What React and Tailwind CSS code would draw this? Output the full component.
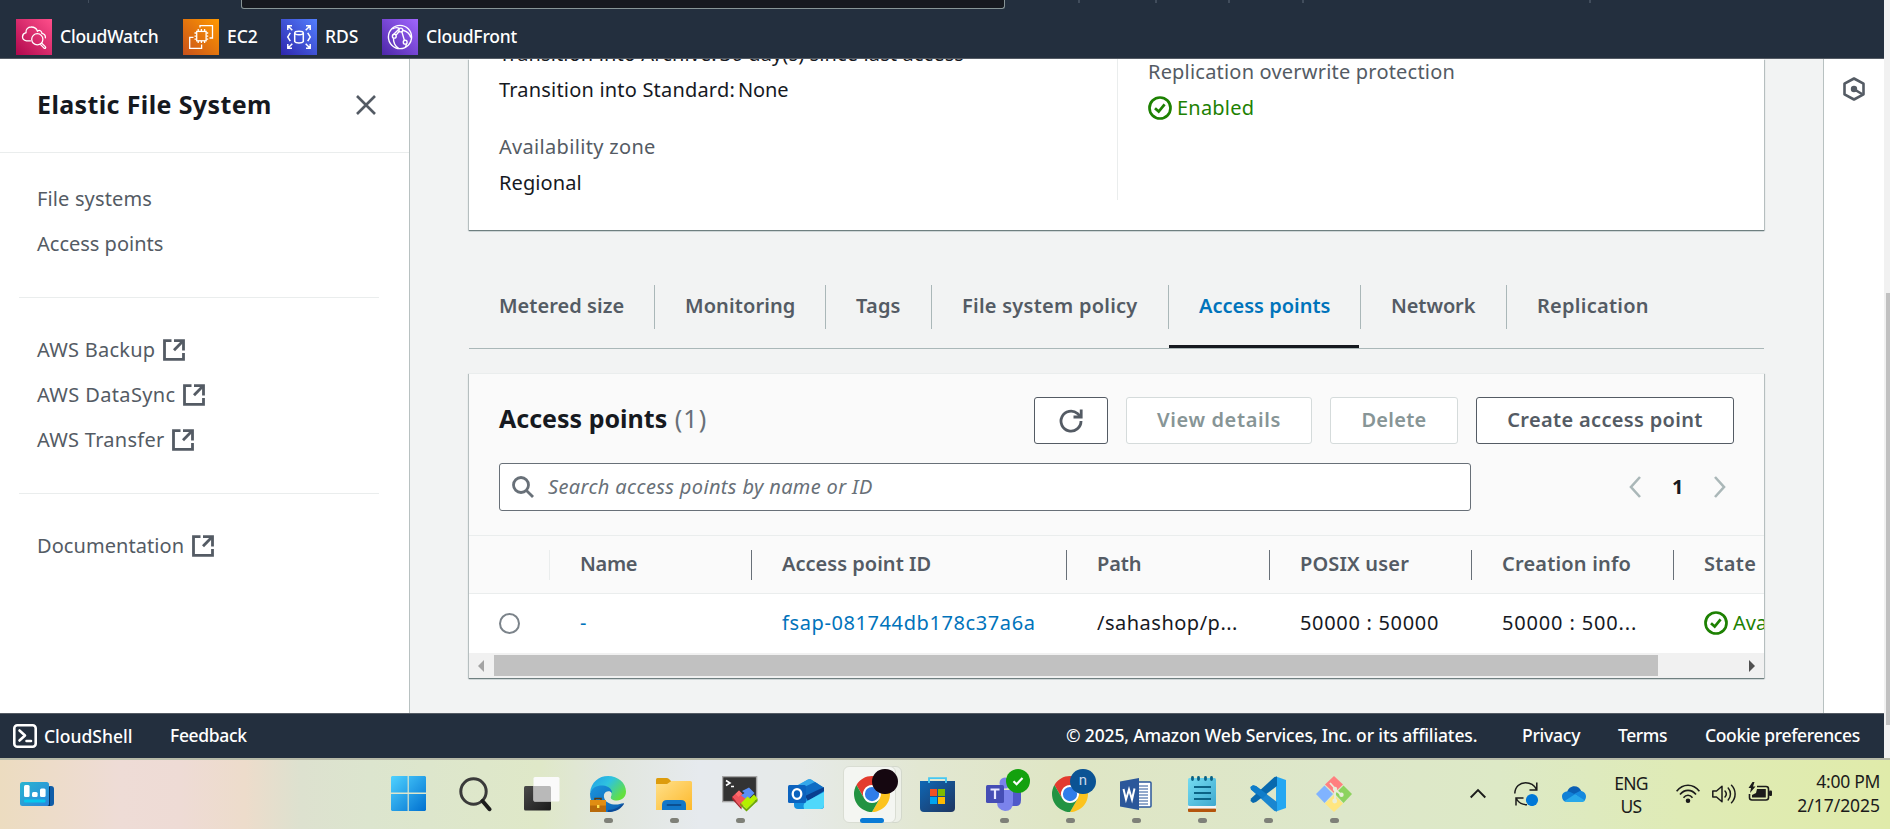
import React from "react";

/* ---------- small console icons ---------- */

const External = () => (
  <svg className="ml-2 h-[22px] w-[22px] shrink-0" viewBox="0 0 22 22" fill="none" stroke="#545b64" strokeWidth="2.8">
    <path d="M8.5 1.6H1.5V20.4H20.5V14" />
    <path d="M11 1.6H20.5V11.5" />
    <path d="M20 2L11 11.2" />
  </svg>
);

const Check = () => (
  <svg className="h-6 w-6 shrink-0" viewBox="0 0 24 24" fill="none" stroke="#1d8102" strokeWidth="2.7">
    <circle cx="12" cy="12" r="10.5" />
    <path d="M7 12.2L10.7 15.6L16.6 8.3" />
  </svg>
);

/* ---------- favourites bar ---------- */

const CloudWatchIcon = () => (
  <svg className="h-9 w-9" viewBox="0 0 36 36">
    <defs>
      <linearGradient id="cw" x1="0" y1="1" x2="1" y2="0">
        <stop offset="0" stopColor="#b0084d" />
        <stop offset="1" stopColor="#ff4f8b" />
      </linearGradient>
    </defs>
    <rect width="36" height="36" fill="url(#cw)" />
    <g fill="none" stroke="#fff" strokeWidth="1.3" strokeLinecap="round">
      <path d="M14.5 21.8H10.5C7.5 21.2 6.4 19.4 6.5 17.6C6.7 15.2 8.4 14.1 10 13.7C9.5 10.4 12 8 15 8C18.5 7.9 20.6 9.6 21.4 12.1C23.5 10.6 25.6 11.8 26 14.4C28.3 15 29.6 16.6 29.4 18.8" />
      <circle cx="21.3" cy="20.3" r="5.6" />
      <path d="M24.6 25.6L28 29.1C29.3 30 30.2 28.6 29.3 27.6L25.8 24.3" />
    </g>
  </svg>
);

const Ec2Icon = () => (
  <svg className="h-9 w-9" viewBox="0 0 36 36">
    <defs>
      <linearGradient id="ec" x1="0" y1="1" x2="1" y2="0">
        <stop offset="0" stopColor="#c8511b" />
        <stop offset="1" stopColor="#ff9900" />
      </linearGradient>
    </defs>
    <rect width="36" height="36" fill="url(#ec)" />
    <g fill="none" stroke="#fff" strokeWidth="1.3">
      <rect x="13.7" y="12.4" width="9.4" height="9.4" />
      <path d="M15.2 12V10M18.4 12V10M21.6 12V10M15.2 24V22M18.4 24V22M21.6 24V22M13.4 14H11.5M13.4 17.1H11.5M13.4 20.2H11.5M25.2 14H23.4M25.2 17.1H23.4M25.2 20.2H23.4" />
      <path d="M17 8.5V6.7H29.5V19H26.5" />
      <path d="M10.5 18.3H6.7V29.3H18.6V25.5" />
    </g>
  </svg>
);

const RdsIcon = () => (
  <svg className="h-9 w-9" viewBox="0 0 36 36">
    <defs>
      <linearGradient id="rd" x1="0" y1="1" x2="1" y2="0">
        <stop offset="0" stopColor="#2e27ad" />
        <stop offset="1" stopColor="#527fff" />
      </linearGradient>
    </defs>
    <rect width="36" height="36" fill="url(#rd)" />
    <g fill="none" stroke="#fff" strokeWidth="1.5">
      <path d="M6.8 11V6.8H11M6.8 6.8L11.3 11.3M25 6.8H29.2V11M29.2 6.8L24.7 11.3M6.8 25V29.2H11M6.8 29.2L11.3 24.7M25 29.2H29.2V25M29.2 29.2L24.7 24.7" />
      <path d="M9.3 13.8L6.7 18L9.3 22.2M26.7 13.8L29.3 18L26.7 22.2" />
      <path d="M13.7 14V22.6C14.8 24.4 21.2 24.4 22.3 22.6V14" />
      <ellipse cx="18" cy="14" rx="4.3" ry="1.7" />
    </g>
  </svg>
);

const CloudFrontIcon = () => (
  <svg className="h-9 w-9" viewBox="0 0 36 36">
    <defs>
      <linearGradient id="cf" x1="0" y1="1" x2="1" y2="0">
        <stop offset="0" stopColor="#4d27a8" />
        <stop offset="1" stopColor="#a166ff" />
      </linearGradient>
    </defs>
    <rect width="36" height="36" fill="url(#cf)" />
    <g fill="none" stroke="#fff" strokeWidth="1.4">
      <circle cx="18" cy="18" r="11.6" />
      <circle cx="18.8" cy="11" r="1.9" />
      <circle cx="12.3" cy="17.2" r="1.9" />
      <circle cx="23.2" cy="23.2" r="1.9" />
      <path d="M14.1 16.1L17.3 12.3M19.8 12.600L22.4 21.4M11 15.900L17.300 9.800M17.4 9.4C14.5 7.6 12 9 10.4 10M20.8 11.3C25 12.4 28 15 28.8 18.6M11.5 19.2C11.3 23.6 13.2 27 16.5 29.4M24.2 24.9C24.4 26.3 24 27.3 23.3 28.2" />
    </g>
  </svg>
);

/* ---------- taskbar icons ---------- */

const WindowsIcon = () => (
  <svg className="-ml-px h-[35px] w-[35px]" viewBox="0 0 35 35">
    <defs>
      <linearGradient id="wi" x1="0" y1="0" x2="1" y2="1">
        <stop offset="0" stopColor="#4fd2ff" />
        <stop offset="1" stopColor="#0070d0" />
      </linearGradient>
    </defs>
    <path d="M1 0H16.6V16.6H0V1ZM17.8 0H34L35 1V16.6H17.8ZM0 18H16.6V35H1L0 34ZM17.8 18H35V34L34 35H17.8Z" fill="url(#wi)" />
  </svg>
);

const SearchIcon = () => (
  <svg className="h-9 w-9" viewBox="0 0 36 36" fill="none">
    <circle cx="15.5" cy="15.5" r="12.7" stroke="#3a3a3a" strokeWidth="3" />
    <path d="M24.5 25L31.500 33.2" stroke="#1c1c1c" strokeWidth="4" strokeLinecap="round" />
  </svg>
);

const TaskViewIcon = () => (
  <svg className="h-9 w-9" viewBox="0 0 36 36">
    <defs>
      <linearGradient id="tv" x1="0" y1="0" x2="1" y2="1">
        <stop offset="0" stopColor="#4a4a4a" />
        <stop offset="1" stopColor="#1b1b1b" />
      </linearGradient>
    </defs>
    <rect x="0" y="10" width="27" height="24.5" rx="1.5" fill="url(#tv)" />
    <rect x="9.5" y="1" width="26" height="24.5" rx="1.5" fill="#fafafa" />
    <path d="M9.5 10H25.5Q27 10 27 11.5V25.5H11Q9.5 25.5 9.5 24Z" fill="#b9b9b9" />
  </svg>
);

const EdgeIcon = () => (
  <svg className="h-9 w-9" viewBox="0 0 36 36">
    <defs>
      <linearGradient id="ed" x1="0" y1="0" x2="1" y2="0.6">
        <stop offset="0" stopColor="#1f9de8" />
        <stop offset="0.5" stopColor="#2fc3df" />
        <stop offset="1" stopColor="#63e03f" />
      </linearGradient>
      <linearGradient id="ed2" x1="0" y1="0" x2="1" y2="1">
        <stop offset="0" stopColor="#1a95de" />
        <stop offset="1" stopColor="#0c5db0" />
      </linearGradient>
    </defs>
    <path d="M0 17C1 6 9 0 18 0C28 0 36 7 36 15.500C36 21 32 24.500 27 24.500C22 24.500 20 22.500 21 20.500C23 17 20 13 15 12C8 11 2 13 0 17Z" fill="url(#ed)" />
    <path d="M0 17.500C2 11 8 9 13 9.500C19 10 22.500 14 22 17C20 14 15 15 14 18.500C13 24 18 28 24 28.500C28 29 31 27.500 33 27C30 33 24 36 18 36C7 36 0 28 0 17.500Z" fill="url(#ed2)" />
    <path d="M18 34C25 34 29 31 33.500 27L34 28C30 34 25 36 18 36Z" fill="#0a4a97" />
    <path d="M5 24.500V22.500H11V24.500" fill="none" stroke="#5a3a10" strokeWidth="1.500" />
    <rect x="0" y="24" width="16" height="12" fill="#b86a0a" />
    <rect x="0" y="24" width="16" height="5.500" fill="#e08d12" />
    <rect x="7" y="29" width="2.400" height="3" fill="#ffe14d" />
  </svg>
);

const FolderIcon = () => (
  <svg className="h-9 w-9" viewBox="0 0 36 36">
    <defs>
      <linearGradient id="fo" x1="0" y1="0" x2="1" y2="1">
        <stop offset="0" stopColor="#ffe08a" />
        <stop offset="1" stopColor="#fdb92c" />
      </linearGradient>
    </defs>
    <path d="M0 3.500Q0 2 1.500 2H10.500Q12 2 13 3L15 5V12H0Z" fill="#dd9c0c" />
    <path d="M0 8H11L15.500 5H34.500Q36 5 36 6.500V34H0Z" fill="url(#fo)" />
    <path d="M6 34V29Q6 24 11 24H25Q30 24 30 29V34Z" fill="#1277c8" />
    <path d="M11.500 29H24.500" stroke="#0b4f91" strokeWidth="1.800" strokeLinecap="round" />
  </svg>
);

const MobaIcon = () => (
  <svg className="h-9 w-9" viewBox="0 0 36 36">
    <rect x="0.600" y="0.600" width="34" height="25" fill="#333" stroke="#a6a6a6" strokeWidth="1.400" />
    <path d="M4 4.500L8 7L4 9.500M9 10.500H12" fill="none" stroke="#fff" strokeWidth="1.600" />
    <path d="M10 21L17 14.500L27 24.500L19.500 31.500Z" fill="#f0545c" />
    <path d="M10 21L19.500 31.500V33.500L10 23Z" fill="#a82028" />
    <path d="M17 14.500L20 17.500L16.500 21L13.500 18Z" fill="#ff6b6b" />
    <path d="M20 15L27 11.500L32.500 17L25.500 24L19 19.500L22.500 17Z" fill="#5a8ff5" />
    <path d="M19 27L25.500 20.500L28 22.500L32 18.500L35.500 22.500L24.500 33Z" fill="#b4f000" />
    <path d="M24.500 33L35.500 22.500V25L24.500 35.500L18 29V27Z" fill="#6da900" />
  </svg>
);

const OutlookIcon = () => (
  <svg className="h-9 w-9" viewBox="0 0 36 36">
    <path d="M6 12L20 3.500Q21.500 2.800 23 3.500L36 12V30Q36 33 33 33H10Q6 33 6 29Z" fill="#1490df" />
    <path d="M6 11L20 3.500Q21.500 2.800 23 3.500L30 8L16 16Z" fill="#35a8ea" />
    <path d="M14 12L27 6L35 11L18 22Z" fill="#0f6cc4" />
    <path d="M17 20L36 11V15L20 25Z" fill="#0a3f8f" />
    <path d="M16 33Q14 27 20 24.500L36 16V29Q36 33 32 33Z" fill="#4fd8fb" />
    <rect x="0" y="9" width="18" height="18" rx="1.500" fill="#0c63bf" />
    <ellipse cx="9" cy="18" rx="4.300" ry="4.800" fill="none" stroke="#fff" strokeWidth="2.300" />
  </svg>
);

const ChromeIcon = () => (
  <svg className="h-9 w-9" viewBox="0 0 48 48">
    <circle cx="24" cy="24" r="12" fill="#fff" />
    <path d="M24 12H44.780a24 24 0 0 0-41.560 0L13.608 30l.01 0A11.985 11.985 0 0 1 24 12Z" fill="#e33b2e" />
    <path d="M34.391 30 24 48A24 24 0 0 0 44.780 12H24A11.985 11.985 0 0 1 34.391 30Z" fill="#fcc31e" />
    <path d="M13.609 30 3.218 12A24 24 0 0 0 24 48L34.393 30a11.985 11.985 0 0 1-20.784 0Z" fill="#229342" />
    <circle cx="24" cy="24" r="9.500" fill="#2f7de9" />
  </svg>
);

const StoreIcon = () => (
  <svg className="h-9 w-9" viewBox="0 0 36 36">
    <defs>
      <linearGradient id="st" x1="0" y1="0" x2="1" y2="1">
        <stop offset="0" stopColor="#0f67b5" />
        <stop offset="1" stopColor="#1e3560" />
      </linearGradient>
    </defs>
    <path d="M0 5H35V32Q35 36 31 36H4Q0 36 0 32Z" fill="url(#st)" />
    <path d="M9 7V2.200H26V7" fill="none" stroke="#45c8f2" strokeWidth="1.800" />
    <rect x="10" y="13" width="7" height="7" fill="#f25022" />
    <rect x="18" y="13" width="7" height="7" fill="#7fba00" />
    <rect x="10" y="21" width="7" height="7" fill="#00a4ef" />
    <rect x="18" y="21" width="7" height="7" fill="#ffb900" />
  </svg>
);

const TeamsIcon = () => (
  <svg className="h-9 w-9" viewBox="0 0 36 36">
    <circle cx="19" cy="7" r="5.500" fill="#7b83eb" />
    <circle cx="31" cy="9" r="4" fill="#5059c9" />
    <path d="M24 14H35V24Q35 30 30 30H25Z" fill="#5059c9" />
    <path d="M11 14H27V26Q27 35 19 35Q11 34 11 26Z" fill="#7b83eb" />
    <rect x="0" y="9" width="18" height="18" rx="1.500" fill="#454db5" />
    <path d="M4.500 13.500H13.500M9 13.500V23" stroke="#e8e8ff" strokeWidth="2.200" />
  </svg>
);

const WordIcon = () => (
  <svg className="h-9 w-9" viewBox="0 0 36 36">
    <rect x="16" y="6" width="17" height="25" rx="1" fill="#fff" stroke="#2b579a" strokeWidth="1.500" />
    <path d="M20 10H30M20 13H30M20 16H30M20 19H30M20 22H30M20 25H30M20 28H30" stroke="#2b579a" strokeWidth="1.200" />
    <path d="M2 5.500L21 2V34L2 30.500Z" fill="#2b579a" />
    <path d="M5.500 13L8 23.500L11 13.500L14 23.500L16.500 12.500" fill="none" stroke="#fff" strokeWidth="2" />
  </svg>
);

const NotepadIcon = () => (
  <svg className="h-9 w-9" viewBox="0 0 36 36">
    <defs>
      <linearGradient id="np" x1="0" y1="0" x2="1" y2="1">
        <stop offset="0" stopColor="#74dcf2" />
        <stop offset="1" stopColor="#3fa9cf" />
      </linearGradient>
    </defs>
    <rect x="4" y="32" width="28" height="4" rx="1" fill="#b4550c" />
    <rect x="4" y="29" width="28" height="3.600" fill="#f5f5f5" />
    <rect x="4" y="2" width="28" height="28" rx="1.500" fill="url(#np)" />
    <path d="M10 11H27M10 17H27M10 23H27" stroke="#0b6285" strokeWidth="1.800" />
    <path d="M8.500 1.400V3.600M14.500 1.400V3.600M21.500 1.400V3.600M27.500 1.400V3.600" stroke="#0b6285" strokeWidth="2.800" strokeLinecap="round" />
  </svg>
);

const CodeIcon = () => (
  <svg className="h-9 w-9" viewBox="0 0 36 36">
    <path d="M26 0.500L36 4V32L26 35.500Z" fill="#24a7f2" />
    <path d="M0.500 11L3 9.200L6 10L27 26V35.500L24.500 35L1 13.500Z" fill="#1a86d0" />
    <path d="M0.500 25L3 27L6 26L27 10V0.500L24.500 1L1 22.500Z" fill="#0869ae" />
    <path d="M0.500 11L3 9.200L6 10L17 18.300L12.500 22.500L1 13.500Z" fill="#0f7cc9" />
  </svg>
);

const GitIcon = () => (
  <svg className="h-9 w-9" viewBox="0 0 36 36">
    <path d="M18 0L27 8.500L18 17L9 8.500Z" fill="#ff8080" />
    <path d="M8.500 9.500L17 18L8.500 27L0 18Z" fill="#80b3ff" />
    <path d="M27.500 9.500L36 18L27.500 27L19 18Z" fill="#8dd35f" />
    <path d="M18 19L27 27.500L18 36L9 27.500Z" fill="#ffe680" />
    <path d="M14 7L19 12.500V24M19 13.500L25 18.500" fill="none" stroke="#e9eedb" strokeWidth="1.800" />
    <circle cx="19" cy="13" r="2.200" fill="#e9eedb" />
    <circle cx="25.500" cy="18.800" r="2.200" fill="#e9eedb" />
    <circle cx="18.700" cy="25" r="2.400" fill="#e9eedb" />
  </svg>
);

/* ---------- building blocks ---------- */

const Fav = ({ icon, label, box, text }) => (
  <div className={"flex items-center " + box}>
    {icon}
    <span className={"ml-2 text-[17.5px] font-medium text-white " + text}>{label}</span>
  </div>
);

const NavLink = ({ label, ext, text }) => (
  <div className="flex h-[45px] items-center text-[20px] text-[#545b64]">
    <span className={text}>{label}</span>
    {ext && <External />}
  </div>
);

const Tab = ({ label, box, text, active, last }) => (
  <div className={"relative flex h-[63px] items-start " + box}>
    <div className={"flex h-11 w-full items-center pb-[3px] pl-[30px] text-[20px] font-semibold " + (last ? "" : "border-r border-[#aab7b8] ") + (active ? "text-[#0073bb]" : "text-[#545b64]")}>
      <span className={text}>{label}</span>
    </div>
    {active && <div className="absolute bottom-0 left-0 h-[3px] w-[190px] bg-[#16191f]" />}
  </div>
);

const Th = ({ label, box, text, last }) => (
  <div className={"flex h-[30px] shrink-0 items-center whitespace-nowrap pb-px pl-[30px] text-[20px] font-semibold text-[#545b64] " + (last ? "" : "border-r border-[#687078] ") + box}>
    <span className={text}>{label}</span>
  </div>
);

const Td = ({ children, box }) => (
  <div className={"flex shrink-0 items-center whitespace-nowrap pb-px pl-[30px] text-[20px] " + box}>{children}</div>
);

const Task = ({ icon, dot, active, badge }) => (
  <div className="relative flex h-[69px] w-[66px] shrink-0 justify-center pt-4">
    {active && (
      <>
        <div className="absolute left-[7px] top-[6px] h-[57px] w-[56px] rounded-md border border-[#d3d8cc] bg-[#edf0e8]" />
        <div className="absolute left-[4px] top-[6px] h-[57px] w-[53px] rounded-md border border-[#d9ddd3] bg-[#f4f6f2]" />
      </>
    )}
    <div className="relative h-9 w-9">{icon}</div>
    {dot && <div className="absolute left-[29px] top-[58px] h-[5px] w-[9px] rounded-full bg-[#7e8078]" />}
    {active && <div className="absolute left-[21px] top-[58px] h-[5px] w-6 rounded-full bg-[#0a7bd6]" />}
    {badge}
  </div>
);

export default function App() {
  return (
    <div className="flex h-[829px] w-[1890px] flex-col overflow-hidden whitespace-nowrap bg-white font-['Noto_Sans',sans-serif] leading-none text-[#16191f]">
      <div className="flex h-[758px]">
        <div className="flex w-[1884px] flex-col">
          {/* console header */}
          <header className="flex h-[59px] shrink-0 flex-col border-b border-[#545b64] bg-[#232f3e]">
            <div className="flex h-[9px] items-start">
              <div className="ml-[88px] h-[3px] w-px bg-[#414d5c]" />
              <div className="ml-[152px] h-[9px] w-[764px] rounded-b-[3px] border border-t-0 border-[#879596] bg-[#16191f]" />
              <div className="ml-[73px] h-[3px] w-[2px] bg-[#414d5c]" />
              <div className="ml-[75px] h-[3px] w-[2px] bg-[#414d5c]" />
              <div className="ml-[71px] h-[3px] w-[2px] bg-[#414d5c]" />
              <div className="ml-[72px] h-[3px] w-[2px] bg-[#414d5c]" />
              <div className="ml-[285px] h-[3px] w-[2px] bg-[#414d5c]" />
            </div>
            <div className="flex pl-4 pt-[10px]">
              <Fav icon={<CloudWatchIcon />} label="CloudWatch" box="w-[167px]" text="-ml-px tracking-[-0.23px]" />
              <Fav icon={<Ec2Icon />} label="EC2" box="w-[98px]" text="-ml-px tracking-[-0.1px]" />
              <Fav icon={<RdsIcon />} label="RDS" box="w-[101px]" text="tracking-[-0.1px]" />
              <Fav icon={<CloudFrontIcon />} label="CloudFront" box="w-[150px]" text="tracking-[-0.2px]" />
            </div>
          </header>

          <div className="flex h-[654px] shrink-0 overflow-hidden">
            {/* side navigation */}
            <nav className="flex w-[410px] shrink-0 flex-col border-r border-[#b8c1c1] bg-white">
              <div className="flex h-[94px] items-center justify-between border-b border-[#eaeded] pb-[2px] pl-[37px] pr-[33px]">
                <span className="text-[25px] font-bold tracking-[0.38px]">Elastic File System</span>
                <svg className="h-5 w-5" viewBox="0 0 20 20" stroke="#545b64" strokeWidth="2.6">
                  <path d="M1 1L19 19M19 1L1 19" />
                </svg>
              </div>
              <div className="pl-[37px] pt-[23px]">
                <NavLink label="File systems" text="tracking-[0.14px]" />
                <NavLink label="Access points" />
              </div>
              <div className="ml-[19px] mr-[30px] mt-[31px] h-px bg-[#eaeded]" />
              <div className="pl-[37px] pt-[29px]">
                <NavLink label="AWS Backup" ext text="tracking-[0.25px]" />
                <NavLink label="AWS DataSync" ext text="tracking-[0.36px]" />
                <NavLink label="AWS Transfer" ext text="tracking-[0.26px]" />
              </div>
              <div className="ml-[19px] mr-[30px] mt-[31px] h-px bg-[#eaeded]" />
              <div className="pl-[37px] pt-[29px]">
                <NavLink label="Documentation" ext text="tracking-[0.06px]" />
              </div>
            </nav>

            {/* main content */}
            <main className="flex w-[1413px] shrink-0 flex-col overflow-hidden bg-[#f2f3f3] pl-[59px]">
              <section className="flex h-[171px] w-[1295px] shrink-0 bg-white text-[20px] leading-9 shadow-[0_1px_1px_#6f7f80,1px_1px_1px_#c5cccc,-1px_1px_1px_#c5cccc]">
                <div className="-mt-[23px] w-[648px] pl-[30px]">
                  <div className="flex gap-[3px] tracking-[0.12px]">
                    <span>Transition into Archive:</span>
                    <span>30 day(s) since last access</span>
                  </div>
                  <div className="flex gap-[3px]">
                    <span className="tracking-[0.19px]">Transition into Standard:</span>
                    <span className="tracking-[-0.1px]">None</span>
                  </div>
                  <div className="mt-[21px] tracking-[0.32px] text-[#545b64]">Availability zone</div>
                  <div className="tracking-[0.1px]">Regional</div>
                </div>
                <div className="h-[141px] border-l border-[#eaeded] pl-[30px]">
                  <div className="-mt-[5px] tracking-[0.2px] text-[#545b64]">Replication overwrite protection</div>
                  <div className="flex items-center gap-[5px] text-[#1d8102]">
                    <Check />
                    <span className="tracking-[0.2px]">Enabled</span>
                  </div>
                </div>
              </section>

              <div className="mt-[55px] flex h-[64px] w-[1295px] shrink-0 border-b border-[#aab7b8]">
                <Tab label="Metered size" box="w-[186px]" text="tracking-[0.04px]" />
                <Tab label="Monitoring" box="w-[171px]" text="tracking-[0.1px]" />
                <Tab label="Tags" box="w-[106px]" text="tracking-[0.2px]" />
                <Tab label="File system policy" box="w-[237px]" text="tracking-[0.25px]" />
                <Tab label="Access points" box="w-[192px]" active />
                <Tab label="Network" box="w-[146px]" text="tracking-[-0.1px]" />
                <Tab label="Replication" box="w-[200px]" text="tracking-[0.25px]" last />
              </div>

              <section className="mt-6 flex h-[305px] w-[1295px] shrink-0 flex-col border-t border-[#eaeded] bg-white shadow-[0_1px_1px_#6f7f80,1px_1px_1px_#c5cccc,-1px_1px_1px_#c5cccc]">
                <div className="h-[161px] shrink-0 bg-[#fafafa] pl-[30px] pr-[30px]">
                  <div className="flex items-center pt-[23px] text-[20px] font-semibold">
                    <div className="flex-1 pb-1 text-[25px] font-bold">
                      Access points <span className="ml-px font-normal tracking-[1.1px] text-[#687078]">(1)</span>
                    </div>
                    <div className="flex h-[47px] w-[74px] items-center justify-center rounded-[3px] border border-[#545b64] bg-white">
                      <svg className="h-6 w-6" viewBox="0 0 24 24" fill="none" stroke="#545b64" strokeWidth="2.8">
                        <path d="M22 12A10 10 0 1 1 18.500 4.500L21 7" />
                        <path d="M22.200 0.500V8H14.500" />
                      </svg>
                    </div>
                    <div className="ml-[18px] flex h-[47px] w-[186px] items-center justify-center rounded-[3px] border border-[#d5dbdb] bg-white pb-[2px] tracking-[0.62px] text-[#879596]">View details</div>
                    <div className="ml-[18px] flex h-[47px] w-[128px] items-center justify-center rounded-[3px] border border-[#d5dbdb] bg-white pb-[2px] tracking-[0.25px] text-[#879596]">Delete</div>
                    <div className="ml-[18px] flex h-[47px] w-[258px] items-center justify-center rounded-[3px] border border-[#545b64] bg-white pb-[2px] tracking-[0.33px] text-[#545b64]">Create access point</div>
                  </div>
                  <div className="mt-[19px] flex items-center">
                    <div className="flex h-12 w-[972px] items-center rounded-[3px] border border-[#687078] bg-white pl-3">
                      <svg className="h-[22px] w-[22px]" viewBox="0 0 22 22" fill="none" stroke="#687078" strokeWidth="2.800">
                        <circle cx="9" cy="9" r="7.500" />
                        <path d="M14.200 14.200L21 21" />
                      </svg>
                      <span className="ml-[14px] text-[20px] italic tracking-[0.36px] text-[#687078]">Search access points by name or ID</span>
                    </div>
                    <svg className="ml-[158px] h-[22px] w-3" viewBox="0 0 12 22" fill="none" stroke="#aab7b8" strokeWidth="2.600">
                      <path d="M11 1L2 11L11 21" />
                    </svg>
                    <span className="ml-[31px] w-3 text-[20px] font-bold">1</span>
                    <svg className="ml-[30px] h-[22px] w-3" viewBox="0 0 12 22" fill="none" stroke="#aab7b8" strokeWidth="2.600">
                      <path d="M1 1L10 11L1 21" />
                    </svg>
                  </div>
                </div>
                <div className="flex h-[59px] w-full shrink-0 items-center overflow-hidden border-b border-t border-[#eaeded] bg-[#fafafa]">
                  <div className="h-[30px] w-[81px] shrink-0 border-r border-[#eaeded]" />
                  <Th label="Name" box="w-[202px]" text="tracking-[-0.3px]" />
                  <Th label="Access point ID" box="w-[315px]" text="tracking-[0.02px]" />
                  <Th label="Path" box="w-[203px]" text="tracking-[-0.1px]" />
                  <Th label="POSIX user" box="w-[202px]" text="tracking-[0.16px]" />
                  <Th label="Creation info" box="w-[202px]" text="tracking-[0.18px]" />
                  <Th label="State" box="w-[120px]" text="tracking-[0.3px]" last />
                </div>
                <div className="flex h-[59px] shrink-0 overflow-hidden">
                  <Td box="w-[81px]">
                    <div className="h-[21px] w-[21px] rounded-full border-2 border-[#7b838a] bg-white" />
                  </Td>
                  <Td box="w-[202px] text-[#0073bb]">-</Td>
                  <Td box="w-[315px] text-[#0073bb] tracking-[0.6px]">fsap-081744db178c37a6a</Td>
                  <Td box="w-[203px] tracking-[0.5px]">/sahashop/p...</Td>
                  <Td box="w-[202px] tracking-[0.68px]">50000 : 50000</Td>
                  <Td box="w-[202px] tracking-[0.84px]">50000 : 500...</Td>
                  <Td box="w-[150px] gap-[5px] text-[#1d8102]">
                    <Check />
                    <span>Available</span>
                  </Td>
                </div>
                <div className="flex h-[25px] shrink-0 items-center bg-[#f1f1f1] pl-[9px] pr-[9px]">
                  <svg className="h-3 w-[6px]" viewBox="0 0 6 12"><path d="M6 0V12L0 6Z" fill="#a3a3a3" /></svg>
                  <div className="ml-[10px] h-[21px] w-[1164px] bg-[#c1c1c1]" />
                  <svg className="ml-auto h-3 w-[6px]" viewBox="0 0 6 12"><path d="M0 0V12L6 6Z" fill="#505050" /></svg>
                </div>
              </section>
            </main>

            {/* right tool strip */}
            <aside className="flex w-[61px] shrink-0 justify-center border-l border-[#b8c1c1] bg-white pt-[18px]">
              <svg className="h-6 w-6" viewBox="0 0 24 24" fill="none" stroke="#545b64" strokeWidth="2.600">
                <path d="M12 1.500L21.500 6.700V17.300L12 22.500L2.500 17.300V6.700Z" strokeLinejoin="round" />
                <circle cx="12" cy="12" r="1.900" fill="#545b64" />
                <path d="M12.500 12.500L20 17" />
              </svg>
            </aside>
          </div>

          <footer className="flex h-[45px] shrink-0 items-center border-t border-[#545b64] bg-[#232f3e] pl-[13px] text-[17.5px] font-medium text-white">
            <svg className="h-6 w-6" viewBox="0 0 24 24" fill="none" stroke="#fff" strokeWidth="2.600">
              <rect x="1.300" y="1.300" width="21.400" height="21.400" rx="3" />
              <path d="M6.500 6.500L12 11.500L6.500 16.500M13.500 17H18" strokeLinejoin="round" strokeLinecap="round" />
            </svg>
            <span className="ml-[7px] w-[126px] pt-[2px]">CloudShell</span>
            <span className="tracking-[-0.35px]">Feedback</span>
            <span className="ml-auto w-[456px] tracking-[-0.15px]">© 2025, Amazon Web Services, Inc. or its affiliates.</span>
            <span className="w-[96px] tracking-[-0.25px]">Privacy</span>
            <span className="w-[87px] tracking-[-0.4px]">Terms</span>
            <span className="w-[179px] tracking-[-0.34px]">Cookie preferences</span>
          </footer>
        </div>

        {/* page scrollbar */}
        <div className="flex w-[6px] justify-end bg-[#f1f1f1] pt-[293px]">
          <div className="h-[432px] w-1 bg-[#c1c1c1]" />
        </div>
      </div>

      {/* taskbar */}
      <div className="flex h-[71px] border-t-2 border-[#b7baa8] bg-[linear-gradient(90deg,#ecdcc0_0px,#eddcc9_50px,#eedcd6_120px,#eedbd5_180px,#eddccb_245px,#dde1cf_300px,#dce5ce_370px,#dfe8c8_540px,#e1e6dd_610px,#e6eaee_700px,#e6eae8_800px,#e2e7d2_920px,#dfe6c5_1060px,#dde7ca_1340px,#dde9c6_1500px,#dfebb6_1680px,#e0ebaa_1890px)]">
        <div className="w-[376px] pl-5 pt-[22px]">
          <svg className="h-6 w-[34px]" viewBox="0 0 34 24">
            <defs>
              <linearGradient id="wg" x1="0" y1="0" x2="1" y2="1">
                <stop offset="0" stopColor="#2bb5d0" />
                <stop offset="1" stopColor="#2a86dc" />
              </linearGradient>
            </defs>
            <path d="M26 4H31Q34 4 34 7V21Q34 24 31 24H26Z" fill="#0f5da8" />
            <rect x="28.400" y="5" width="1.300" height="19" fill="#0a2340" />
            <rect width="29" height="24" rx="2.500" fill="url(#wg)" />
            <rect x="4" y="3" width="5.600" height="12" rx="1.500" fill="#fff" />
            <rect x="12" y="10" width="5.600" height="5" rx="1.500" fill="#fff" />
            <rect x="20" y="6.500" width="5.600" height="8.500" rx="1.500" fill="#fff" />
            <rect x="4" y="17.500" width="21.500" height="3" rx="1" fill="#06c8ee" />
          </svg>
        </div>
        <div className="flex w-[992px] shrink-0 pl-px">
          <Task icon={<WindowsIcon />} />
          <Task icon={<SearchIcon />} />
          <Task icon={<TaskViewIcon />} />
          <Task icon={<EdgeIcon />} dot />
          <Task icon={<FolderIcon />} dot />
          <Task icon={<MobaIcon />} dot />
          <Task icon={<OutlookIcon />} />
          <Task
            icon={<ChromeIcon />}
            active
            badge={<div className="absolute left-[33px] top-[9px] h-[25px] w-[26px] rounded-full bg-[#150710]" />}
          />
          <Task icon={<StoreIcon />} />
          <Task
            icon={<TeamsIcon />}
            dot
            badge={
              <div className="absolute left-[35px] top-[9px] flex h-6 w-6 items-center justify-center rounded-full bg-[#13a10e]">
                <svg className="h-3 w-3" viewBox="0 0 12 12" fill="none" stroke="#fff" strokeWidth="2.200">
                  <path d="M1.500 6.200L4.600 9.200L10.500 3" />
                </svg>
              </div>
            }
          />
          <Task
            icon={<ChromeIcon />}
            dot
            badge={
              <div className="absolute left-[33px] top-[9px] flex h-[25px] w-[26px] items-center justify-center rounded-full bg-[#0b5394] pb-[2px] font-['Roboto',sans-serif] text-[15px] text-[#c8d8ea]">n</div>
            }
          />
          <Task icon={<WordIcon />} dot />
          <Task icon={<NotepadIcon />} dot />
          <Task icon={<CodeIcon />} dot />
          <Task icon={<GitIcon />} dot />
        </div>

        {/* system tray */}
        <div className="ml-[102px] flex flex-1 items-start text-[17.5px] text-[#1b1b1b]">
          <svg className="mt-[28px] h-[11px] w-4" viewBox="0 0 16 11" fill="none" stroke="#1b1b1b" strokeWidth="1.900">
            <path d="M0.700 9.500L8 2L15.300 9.500" />
          </svg>
          <svg className="ml-7 mt-[22px] h-6 w-[25px]" viewBox="0 0 25 24" fill="none" stroke="#1b1b1b" strokeWidth="1.500">
            <path d="M0.800 11.500C1 4.500 6 0.800 11.500 0.800C17 0.800 20.500 3.500 22.500 7.500M22.800 0.500V8H15.500" />
            <path d="M2 23.500V16H9.500M2.200 16.500C4.500 20.500 8 22.800 13 22.800" />
            <circle cx="18" cy="18" r="6.100" fill="#0078d7" stroke="none" />
          </svg>
          <svg className="ml-[23px] mt-[26px] h-4 w-6" viewBox="0 0 24 16">
            <path d="M5 6.500C6 2.500 9 0.300 12.300 0.300C15.500 0.300 18 2 19.200 5L13 9Z" fill="#0a5fb4" />
            <path d="M0 10.500C0 7 3 5.300 6 5.500C8 5.500 10 7 14 9L4 15.800C1.500 15.500 0 13 0 10.500Z" fill="#1080d6" />
            <path d="M12 8L18 5C21.500 4.800 24 7.500 24 10.500C24 12.500 23 14 22 15Z" fill="#1689de" />
            <path d="M2.500 15L13 8.200L23 14.500C22 15.600 21 16 19.500 16H5.500C4.300 16 3.400 15.600 2.500 15Z" fill="#28a8ea" />
          </svg>
          <div className="ml-[27px] mt-[12px] w-[36px] text-center leading-[23px] tracking-[-0.7px]">
            <div>ENG</div>
            <div>US</div>
          </div>
          <svg className="ml-[27px] mt-[24px] h-5 w-6" viewBox="0 0 24 20" fill="none" stroke="#1b1b1b" strokeWidth="1.600">
            <path d="M0.600 7.200C7 -0.800 17 -0.800 23.400 7.200" />
            <path d="M4 10.500C8.500 5 15.500 5 20 10.500" />
            <path d="M7.500 13.700C10 10.500 14 10.500 16.500 13.700" />
            <circle cx="12" cy="16.700" r="1.500" fill="#1b1b1b" />
          </svg>
          <svg className="ml-[12px] mt-[24px] h-5 w-[25px]" viewBox="0 0 25 20" fill="none" stroke="#1b1b1b" strokeWidth="1.500" strokeLinejoin="round">
            <path d="M0.800 7V13H4.500L10 17.800V2.200L4.500 7Z" />
            <path d="M13 7C14.500 8.700 14.500 11.300 13 13M16.200 4C19.200 7.500 19.200 12.500 16.200 16M19.500 1.200C24.300 6.200 24.300 13.800 19.500 18.800" strokeLinecap="round" />
          </svg>
          <svg className="ml-[11px] mt-[22px] h-[22px] w-6" viewBox="0 0 24 22" fill="none" stroke="#1b1b1b" strokeWidth="1.600">
            <path d="M9 4.500H18Q20.500 4.500 20.500 7V15.500Q20.500 18 18 18H4Q1.500 18 1.500 15.500V12" />
            <path d="M9 7H17.800V15.500H4V13L8 11Z" fill="#1b1b1b" stroke="none" />
            <rect x="21" y="8.500" width="3" height="5.500" rx="1" fill="#1b1b1b" stroke="none" />
            <path d="M4.500 0L0.500 6H3L2 11L7.500 4.500H5L6.500 0Z" fill="#1b1b1b" stroke="none" />
          </svg>
          <div className="ml-auto mr-[10px] mt-[9px] text-right leading-[24px]">
            <div className="tracking-[-0.3px]">4:00 PM</div>
            <div className="tracking-[-0.05px]">2/17/2025</div>
          </div>
        </div>
      </div>
    </div>
  );
}
